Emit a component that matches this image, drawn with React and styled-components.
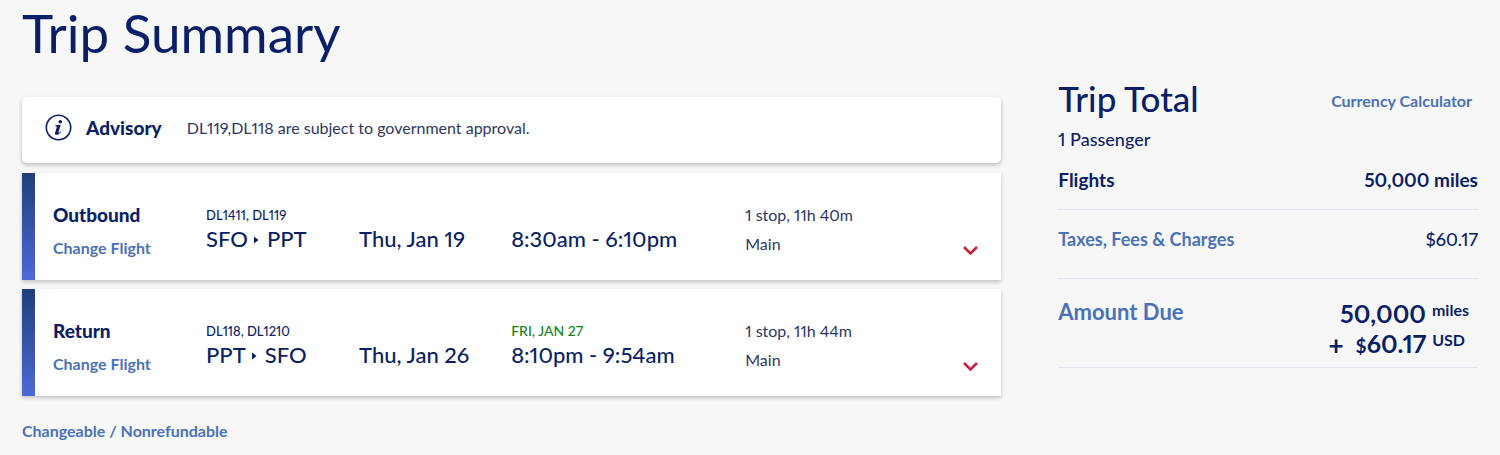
import React, { useState } from "react";
import styled, { createGlobalStyle } from "styled-components";

const navy = "#0b1f66";
const slate = "#2d3763";
const link = "#4a72b8";

const GlobalStyle = createGlobalStyle`
  *, *::before, *::after { box-sizing: border-box; }
  body {
    margin: 0;
    background: #f7f7f8;
    color: ${navy};
    font-family: Lato, "Noto Sans", sans-serif;
    font-size: 18px;
    font-variant-numeric: proportional-nums;
    line-height: 24px;
  }
`;

const Page = styled.main`
  padding: 0 22px 12px;
`;

const Title = styled.h1`
  margin: 0;
  font-size: 53px;
  line-height: 66px;
  font-weight: 400;
`;

const Columns = styled.div`
  display: grid;
  grid-template-columns: 7fr 3fr;
  column-gap: 57px;
  align-items: start;
`;

const TripList = styled.section`
  padding-top: 31px;
`;

const Flights = styled.div`
  display: flex;
  flex-direction: column;
  gap: 9px;
  padding-top: 10px;
`;

const Advisory = styled.div`
  display: flex;
  align-items: center;
  min-height: 66px;
  padding: 0 23px 5px;
  background: #fff;
  border-radius: 5px;
  box-shadow: 0 2px 4px rgba(0, 0, 0, 0.25);
`;

const AdvisoryLabel = styled.strong`
  margin: 0 25px 0 14px;
  font-size: 19px;
  font-weight: 900;
`;

const AdvisoryText = styled.span`
  color: ${slate};
  font-size: 16px;
`;

const Card = styled.article`
  display: flex;
  min-height: 107px;
  background: #fff;
  box-shadow: 0 2px 4px rgba(0, 0, 0, 0.22);
`;

const Accent = styled.div`
  flex: 0 0 13px;
  background: linear-gradient(#1f3f7a, #4f68d8);
`;

const CardGrid = styled.div`
  flex: 1;
  display: grid;
  grid-template-columns: 153fr 153fr 152fr 234fr 238fr;
  padding: 30px 18px 12px;
`;

const Cell = styled.div`
  display: grid;
  grid-template-rows: 23px 1fr;
  white-space: nowrap;
`;

const Direction = styled.h2`
  margin: 0;
  font-size: 19px;
  line-height: 24px;
  font-weight: 900;
`;

const TextLink = styled.a`
  color: ${link};
  font-size: ${(p) => p.$size || 16}px;
  line-height: 24px;
  font-weight: 700;
  text-decoration: none;
`;

const LinkLine = styled.div`
  padding-top: 9px;
`;

const Small = styled.span`
  color: ${(p) => (p.$green ? "#16851a" : navy)};
  font-size: ${(p) => (p.$green ? 14 : 13)}px;
  font-weight: 500;
`;

const Large = styled.div`
  display: flex;
  align-items: center;
  height: 26px;
  font-size: 22px;
  line-height: 26px;
  font-weight: 500;
`;

const Arrow = styled.svg`
  margin: 2px 8px 0 6px;
`;

const Details = styled.div`
  display: flex;
  justify-content: space-between;
  color: ${slate};
  font-size: 16px;
  white-space: nowrap;
`;

const DetailLine = styled.div`
  margin-bottom: 5px;
`;

const Toggle = styled.button`
  align-self: flex-end;
  display: flex;
  margin-bottom: 8px;
  padding: 4px;
  border: 0;
  background: none;
  cursor: pointer;
`;

const Footer = styled.div`
  padding-top: 22px;
`;

const Total = styled.aside`
  padding-top: 11px;
`;

const TotalHeader = styled.div`
  display: flex;
  align-items: flex-end;
  justify-content: space-between;
  padding-right: 6px;
`;

const TotalTitle = styled.h2`
  margin: 0;
  font-size: 35px;
  line-height: 42px;
  font-weight: 500;
`;

const HeaderLink = styled.div`
  padding-bottom: 6px;
`;

const Passengers = styled.div`
  padding-top: 8px;
  font-weight: 500;
`;

const TotalRow = styled.div`
  display: flex;
  justify-content: space-between;
  padding: ${(p) => p.$pad};
  border-bottom: 1px solid #e4e7ef;
  font-size: ${(p) => (p.$bold ? 19 : 18)}px;
  font-weight: ${(p) => (p.$bold ? 700 : 500)};
`;

const DueLabel = styled.div`
  padding-top: 2px;
`;

const Due = styled.div`
  display: flex;
  flex-direction: column;
  align-items: flex-end;
  padding-right: 9px;
`;

const DueLine = styled.div`
  display: flex;
  align-items: center;
  gap: 6px;
  padding-right: ${(p) => (p.$inset ? 4 : 0)}px;
  line-height: 30px;
`;

const Amount = styled.span`
  font-size: 25px;
  font-weight: 700;
`;

const Unit = styled.span`
  align-self: flex-start;
  font-size: 16px;
  line-height: 24px;
  font-weight: 700;
`;

const Currency = styled.span`
  font-size: 19px;
`;

const Plus = styled.span`
  margin-right: 6px;
  font-size: 26px;
  font-weight: 700;
`;

function InfoIcon() {
  return (
    <svg width="27" height="27" viewBox="0 0 27 27" aria-hidden="true">
      <circle cx="13.5" cy="13.5" r="12.2" fill="none" stroke={navy} strokeWidth="1.6" />
      <circle cx="15.3" cy="7.7" r="1.8" fill={navy} />
      <path
        d="M10.4 11.2 15.7 10.8 13.5 18.2C13.2 19.2 13.8 19.2 15.6 17.4L16.1 17.9C14.1 20.3 12.3 21.1 11 20.8 9.9 20.5 9.8 19.5 10.2 18.2L11.9 12.7 10.2 12.1Z"
        fill={navy}
      />
    </svg>
  );
}

const flights = [
  { direction: "Outbound", numbers: "DL1411, DL119", from: "SFO", to: "PPT", date: "Thu, Jan 19", arrives: "", time: "8:30am - 6:10pm", stops: "1 stop, 11h 40m", cabin: "Main" },
  { direction: "Return", numbers: "DL118, DL1210", from: "PPT", to: "SFO", date: "Thu, Jan 26", arrives: "FRI, JAN 27", time: "8:10pm - 9:54am", stops: "1 stop, 11h 44m", cabin: "Main" },
];

function FlightCard({ flight }) {
  const [open, setOpen] = useState(false);
  return (
    <Card>
      <Accent />
      <CardGrid>
        <Cell>
          <Direction>{flight.direction}</Direction>
          <LinkLine><TextLink href="#change">Change Flight</TextLink></LinkLine>
        </Cell>
        <Cell>
          <Small>{flight.numbers}</Small>
          <Large>
            {flight.from}
            <Arrow width="5" height="8" viewBox="0 0 5 8" aria-hidden="true"><path d="M0 0.5 4.5 4 0 7.5Z" fill={navy} /></Arrow>
            {flight.to}
          </Large>
        </Cell>
        <Cell>
          <span />
          <Large>{flight.date}</Large>
        </Cell>
        <Cell>
          <Small $green>{flight.arrives}</Small>
          <Large>{flight.time}</Large>
        </Cell>
        <Details>
          <div>
            <DetailLine>{flight.stops}</DetailLine>
            <div>{flight.cabin}</div>
          </div>
          <Toggle type="button" aria-label={`${flight.direction} details`} aria-expanded={open} onClick={() => setOpen(!open)}>
            <svg width="17" height="11" viewBox="0 0 17 11" aria-hidden="true">
              <path d="M2 2 8.5 8.5 15 2" fill="none" stroke="#cb1f3a" strokeWidth="2.6" />
            </svg>
          </Toggle>
        </Details>
      </CardGrid>
    </Card>
  );
}

export default function App() {
  return (
    <>
      <GlobalStyle />
      <Page>
        <Title>Trip Summary</Title>
        <Columns>
          <TripList>
            <Advisory role="note">
              <InfoIcon />
              <AdvisoryLabel>Advisory</AdvisoryLabel>
              <AdvisoryText>DL119,DL118 are subject to government approval.</AdvisoryText>
            </Advisory>
            <Flights>
              {flights.map((f) => <FlightCard key={f.direction} flight={f} />)}
            </Flights>
            <Footer><TextLink href="#fare-rules">Changeable / Nonrefundable</TextLink></Footer>
          </TripList>
          <Total>
            <TotalHeader>
              <TotalTitle>Trip Total</TotalTitle>
              <HeaderLink><TextLink href="#currency">Currency Calculator</TextLink></HeaderLink>
            </TotalHeader>
            <Passengers>1 Passenger</Passengers>
            <TotalRow $bold $pad="17px 0"><span>Flights</span><span>50,000 miles</span></TotalRow>
            <TotalRow $pad="17px 0 27px"><TextLink $size={18} href="#taxes">Taxes, Fees &amp; Charges</TextLink><span>$60.17</span></TotalRow>
            <TotalRow $pad="19px 0 6px">
              <DueLabel><TextLink $size={22} href="#due">Amount Due</TextLink></DueLabel>
              <Due>
                <DueLine><Amount>50,000</Amount><Unit>miles</Unit></DueLine>
                <DueLine $inset><Plus>+</Plus><Amount><Currency>$</Currency>60.17</Amount><Unit>USD</Unit></DueLine>
              </Due>
            </TotalRow>
          </Total>
        </Columns>
      </Page>
    </>
  );
}
